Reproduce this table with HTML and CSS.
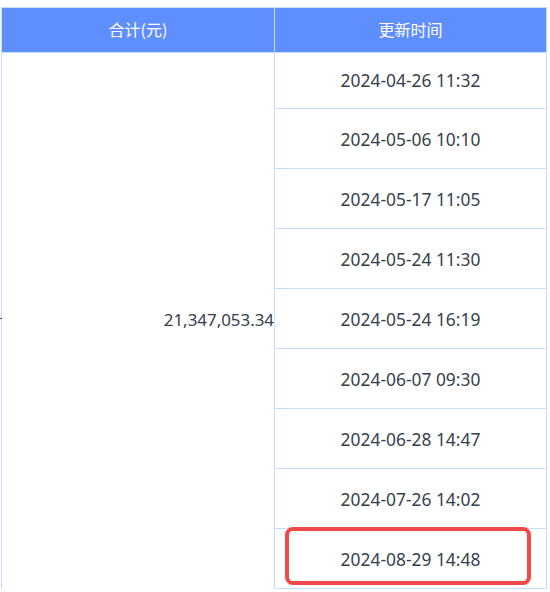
FILE: index.html
```html
<!DOCTYPE html>
<html lang="zh-CN">
<head>
<meta charset="utf-8">
<link rel="stylesheet" href="styles.css">
</head>
<body>
<div class="table">
  <div class="head">
    <div class="th th-left">合计(元)</div>
    <div class="th">更新时间</div>
  </div>
  <div class="body">
    <div class="total"><span class="stray"></span>21,347,053.34</div>
    <div class="times">
      <div class="row first">2024-04-26 11:32</div>
      <div class="row">2024-05-06 10:10</div>
      <div class="row">2024-05-17 11:05</div>
      <div class="row">2024-05-24 11:30</div>
      <div class="row">2024-05-24 16:19</div>
      <div class="row">2024-06-07 09:30</div>
      <div class="row">2024-06-28 14:47</div>
      <div class="row">2024-07-26 14:02</div>
      <div class="row last">2024-08-29 14:48<span class="mark"></span></div>
    </div>
  </div>
</div>
</body>
</html>
```

FILE: styles.css
```css
* { box-sizing: border-box; }
html, body { margin: 0; padding: 0; background: #fff; overflow: hidden; }
body {
  font-family: "Noto Sans", "Noto Sans CJK SC", sans-serif;
  color: #363f4d;
}
.table {
  margin: 7px 0 0 1px;
  width: 546px;
  border: 1px solid #c4dcfd;
  border-bottom: none;
}
.head {
  display: grid;
  grid-template-columns: 273px 1fr;
  background: #5f8fff;
  border-bottom: 1px solid #c4dcfd;
  height: 45px;
}
.th {
  display: flex;
  align-items: center;
  justify-content: center;
  color: #fff;
  font-family: "Noto Sans CJK SC", sans-serif;
  font-size: 16px;
  padding-bottom: 2px;
}
.th-left { border-right: 1px solid #c4dcfd; }
.body {
  display: grid;
  grid-template-columns: 273px 1fr;
}
.total {
  position: relative;
  display: flex;
  align-items: center;
  justify-content: flex-end;
  border-right: 1px solid #c4dcfd;
  font-size: 16.9px;
  padding-bottom: 3px;
}
.stray {
  position: absolute;
  left: -2px;
  top: 265px;
  width: 2px;
  height: 1px;
  background: #363f4d;
}
.times { display: flex; flex-direction: column; }
.row {
  position: relative;
  height: 60px;
  display: flex;
  align-items: center;
  justify-content: center;
  border-bottom: 1px solid #c4dcfd;
  font-size: 17.4px;
}
.row.first { height: 56px; padding-bottom: 1px; }
.mark {
  position: absolute;
  left: 10px;
  top: -2px;
  width: 246px;
  height: 58px;
  border: 4px solid #f04a48;
  border-radius: 8px;
}
```
